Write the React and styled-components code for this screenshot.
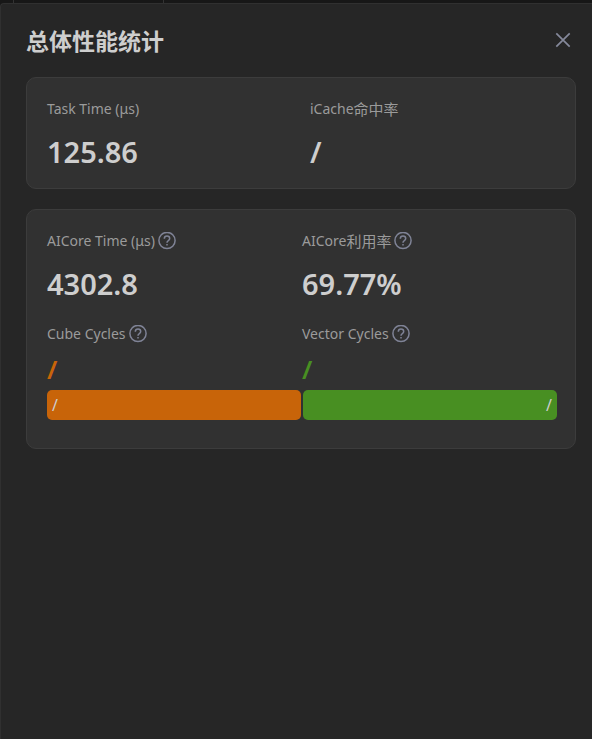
import React from 'react';
import styled, { createGlobalStyle } from 'styled-components';

const GlobalStyle = createGlobalStyle`
  body {
    margin: 0;
    background: #171717;
    color: #cecece;
    font-family: 'Noto Sans', 'Noto Sans CJK SC', sans-serif;
  }
`;

const Page = styled.div`
  display: flex;
  flex-direction: column;
  min-height: 100vh;
`;

const TabStrip = styled.div`
  display: flex;
  height: 3px;
`;

const Tab = styled.div`
  box-sizing: border-box;
  width: ${({ $width }) => $width}px;
  border-right: 1px solid #333333;
`;

const Panel = styled.main`
  flex: 1;
  box-sizing: border-box;
  padding: 18px 16px 24px 25px;
  background: #262626;
  border: 1px solid #303030;
  border-width: 1px 0 0 1px;
  border-radius: 4px 0 0 0;
`;

const Header = styled.header`
  display: flex;
  align-items: center;
  justify-content: space-between;
  height: 36px;
  margin-bottom: 19px;
`;

const Title = styled.h1`
  margin: 0;
  font-family: 'Noto Sans CJK SC', sans-serif;
  font-size: 23px;
  line-height: 36px;
  font-weight: 700;
`;

const CloseButton = styled.button`
  display: flex;
  padding: 5px;
  border: 0;
  background: none;
  color: #85899b;
  cursor: pointer;
`;

const Card = styled.section`
  padding: 20px 18px 18px 20px;
  margin-bottom: 20px;
  background: #313131;
  border: 1px solid #3c3c3c;
  border-radius: 10px;
`;

const Row = styled.div`
  display: grid;
  grid-template-columns: 1fr 1fr;
  column-gap: ${({ $gap = 0 }) => $gap}px;
  margin-bottom: ${({ $space = 0 }) => $space}px;
`;

const Label = styled.div`
  display: flex;
  align-items: center;
  height: 22px;
  color: #9b9b9b;
  font-size: 14px;
  line-height: 22px;
  white-space: nowrap;
`;

const Han = styled.span`
  font-size: 15px;
`;

const HelpButton = styled.button`
  display: flex;
  padding: 0;
  margin-left: 3px;
  border: 0;
  background: none;
  color: #7f8396;
  cursor: help;
`;

const Value = styled.div`
  margin-top: 14px;
  font-size: 29px;
  line-height: 36px;
  font-weight: 600;
`;

const CycleValue = styled.div`
  margin-top: 8px;
  color: ${({ $color }) => $color};
  font-size: 26px;
  line-height: 32px;
  font-weight: 600;
`;

const Bars = styled.div`
  display: flex;
  gap: 2px;
  margin-bottom: 10px;
`;

const Bar = styled.div`
  flex: 1;
  padding: 0 5px;
  border-radius: 5px;
  background: ${({ $color }) => $color};
  font-size: 16px;
  line-height: 30px;
  text-align: ${({ $align }) => $align};
`;

const orange = '#c86409';
const green = '#488f22';

const CloseIcon = () => (
  <svg width="16" height="16" viewBox="0 0 16 16" fill="none" stroke="currentColor" strokeWidth="1.7">
    <path d="M1.300 1.300 14.700 14.700M14.700 1.300 1.300 14.700" />
  </svg>
);

const HelpIcon = () => (
  <svg width="18" height="18" viewBox="0 0 18 18" fill="none" stroke="currentColor" strokeWidth="1.5">
    <circle cx="9" cy="8.500" r="8.1" />
    <path d="M6.300 6.700C6.300 4.900 7.500 4 9 4s2.700.9 2.700 2.400c0 1.100-.7 1.700-1.400 2.200C9.400 9.200 9 9.600 9 10.700" />
    <path d="M9 11.900v1.500" />
  </svg>
);

const StatLabel = ({ text, han, help }) => (
  <Label>
    {text}
    {han && <Han>{han}</Han>}
    {help && (
      <HelpButton type="button" aria-label={`${text}${han || ''}`}>
        <HelpIcon />
      </HelpButton>
    )}
  </Label>
);

const Stat = ({ value, ...label }) => (
  <div>
    <StatLabel {...label} />
    <Value>{value}</Value>
  </div>
);

const Cycles = ({ value, color, ...label }) => (
  <div>
    <StatLabel {...label} help />
    <CycleValue $color={color}>{value}</CycleValue>
  </div>
);

const App = () => {
  return (
    <Page>
      <GlobalStyle />
      <TabStrip>
        <Tab $width={14} />
        <Tab $width={150} />
      </TabStrip>
      <Panel>
        <Header>
          <Title>总体性能统计</Title>
          <CloseButton type="button" aria-label="关闭">
            <CloseIcon />
          </CloseButton>
        </Header>
        <Card>
          <Row $gap={16}>
            <Stat text="Task Time (μs)" value="125.86" />
            <Stat text="iCache" han="命中率" value="/" />
          </Row>
        </Card>
        <Card>
          <Row $space={21}>
            <Stat text="AICore Time (μs)" value="4302.8" help />
            <Stat text="AICore" han="利用率" value="69.77%" help />
          </Row>
          <Row $space={5}>
            <Cycles text="Cube Cycles" value="/" color={orange} />
            <Cycles text="Vector Cycles" value="/" color={green} />
          </Row>
          <Bars>
            <Bar $color={orange} $align="left">/</Bar>
            <Bar $color={green} $align="right">/</Bar>
          </Bars>
        </Card>
      </Panel>
    </Page>
  );
};

export default App;
